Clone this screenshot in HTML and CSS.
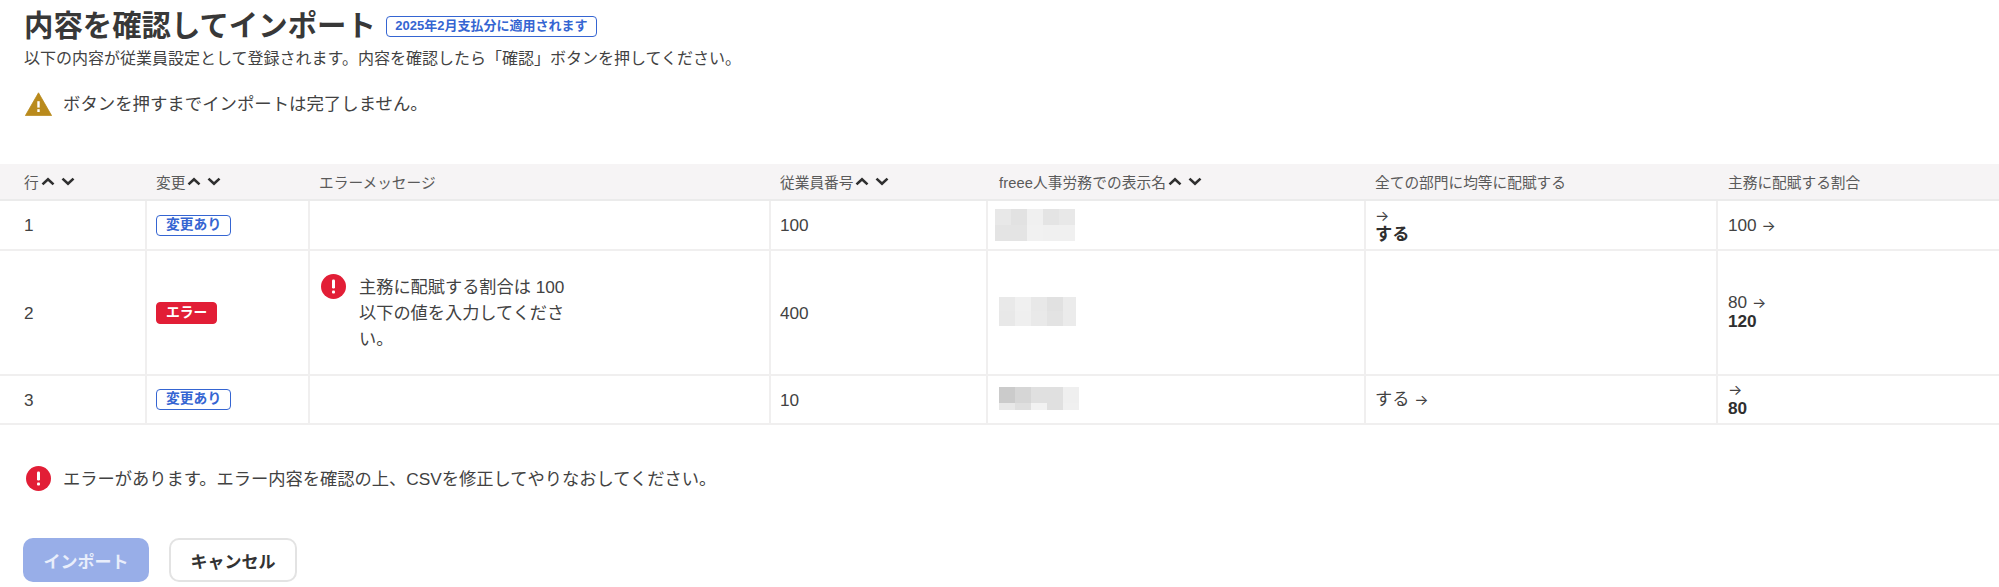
FILE: index.html
```html
<!DOCTYPE html>
<html lang="ja">
<head>
<meta charset="utf-8">
<title>内容を確認してインポート</title>
<link rel="stylesheet" href="styles.css">
</head>
<body>
<section class="intro">
  <div class="title-row">
    <h1 class="title">内容を確認してインポート</h1>
    <span class="tag tag-wide">2025年2月支払分に適用されます</span>
  </div>
  <p class="subtitle">以下の内容が従業員設定として登録されます。内容を確認したら「確認」ボタンを押してください。</p>
  <div class="notice notice-warning">
    <svg class="warn-icon" viewBox="0 0 27 24" aria-hidden="true"><path d="M13.5 .8 26.6 23.6H.4Z" fill="#b98a1c" stroke="#b98a1c" stroke-width=".8" stroke-linejoin="round"/><rect x="12.3" y="9.2" width="2.4" height="6.4" fill="#fff"/><rect x="12.3" y="17.2" width="2.4" height="2.8" fill="#fff"/></svg>
    <span>ボタンを押すまでインポートは完了しません。</span>
  </div>
</section>

<table class="grid">
  <colgroup>
    <col class="c1"><col class="c2"><col class="c3"><col class="c4"><col class="c5"><col class="c6"><col class="c7">
  </colgroup>
  <thead>
    <tr>
      <th class="first"><span class="th-in">行<svg class="chev chev-up" viewBox="0 0 14 9"><path d="M1.5 7.4 7 2.2l5.5 5.2"/></svg><svg class="chev" viewBox="0 0 14 9"><path d="M1.5 1.6 7 6.8l5.5-5.2"/></svg></span></th>
      <th><span class="th-in">変更<svg class="chev chev-up" viewBox="0 0 14 9"><path d="M1.5 7.4 7 2.2l5.5 5.2"/></svg><svg class="chev" viewBox="0 0 14 9"><path d="M1.5 1.6 7 6.8l5.5-5.2"/></svg></span></th>
      <th>エラーメッセージ</th>
      <th><span class="th-in">従業員番号<svg class="chev chev-up" viewBox="0 0 14 9"><path d="M1.5 7.4 7 2.2l5.5 5.2"/></svg><svg class="chev" viewBox="0 0 14 9"><path d="M1.5 1.6 7 6.8l5.5-5.2"/></svg></span></th>
      <th><span class="th-in th-name">freee人事労務での表示名<svg class="chev chev-up" viewBox="0 0 14 9"><path d="M1.5 7.4 7 2.2l5.5 5.2"/></svg><svg class="chev" viewBox="0 0 14 9"><path d="M1.5 1.6 7 6.8l5.5-5.2"/></svg></span></th>
      <th>全ての部門に均等に配賦する</th>
      <th>主務に配賦する割合</th>
    </tr>
  </thead>
  <tbody>
    <tr class="r1">
      <td class="first">1</td>
      <td><span class="tag">変更あり</span></td>
      <td></td>
      <td>100</td>
      <td class="name">
        <svg class="blur blur-a" width="80" height="32" viewBox="0 0 80 32"><rect width="16" height="16" fill="#e8e8e8"/><rect x="16" width="16" height="16" fill="#e2e2e2"/><rect x="32" width="16" height="16" fill="#f0f0f0"/><rect x="48" width="16" height="16" fill="#e4e4e4"/><rect x="64" width="16" height="16" fill="#e8e8e8"/><rect y="16" width="32" height="16" fill="#e4e4e4"/><rect x="32" y="16" width="16" height="16" fill="#f1f1f1"/><rect x="48" y="16" width="32" height="16" fill="#f0f0f0"/></svg>
      </td>
      <td class="change"><span class="arrow">→</span><br><b>する</b></td>
      <td class="last">100 <span class="arrow">→</span></td>
    </tr>
    <tr class="r2">
      <td class="first">2</td>
      <td><span class="tag tag-error">エラー</span></td>
      <td class="err-cell">
        <div class="err-msg">
          <svg class="err-icon" viewBox="0 0 25 25" aria-hidden="true"><circle cx="12.5" cy="12.5" r="12.5" fill="#e21e36"/><rect x="11" y="5.5" width="3" height="9" rx="1.2" fill="#fff"/><rect x="11" y="16.4" width="3" height="3" rx="1" fill="#fff"/></svg>
          <span class="err-text">主務に配賦する割合は 100 以下の値を入力してください。</span>
        </div>
      </td>
      <td>400</td>
      <td class="name">
        <svg class="blur blur-b" width="77" height="29" viewBox="0 0 77 29"><rect width="16" height="14" fill="#e9e9e9"/><rect x="16" width="16" height="14" fill="#f0f0f0"/><rect x="32" width="16" height="14" fill="#e8e8e8"/><rect x="48" width="16" height="14" fill="#e1e1e1"/><rect x="64" width="13" height="14" fill="#ebebeb"/><rect y="14" width="16" height="15" fill="#e8e8e8"/><rect x="16" y="14" width="16" height="15" fill="#efefef"/><rect x="32" y="14" width="16" height="15" fill="#e9e9e9"/><rect x="48" y="14" width="16" height="15" fill="#e3e3e3"/><rect x="64" y="14" width="13" height="15" fill="#ebebeb"/></svg>
      </td>
      <td></td>
      <td class="change last">80 <span class="arrow">→</span><br><b>120</b></td>
    </tr>
    <tr class="r3">
      <td class="first">3</td>
      <td><span class="tag">変更あり</span></td>
      <td></td>
      <td>10</td>
      <td class="name">
        <svg class="blur blur-c" width="80" height="23" viewBox="0 0 80 23"><rect width="16" height="16" fill="#cbcbcb"/><rect x="16" width="16" height="16" fill="#d6d6d6"/><rect x="32" width="32" height="16" fill="#e0e0e0"/><rect x="64" width="16" height="16" fill="#efefef"/><rect y="16" width="16" height="7" fill="#e8e8e8"/><rect x="16" y="16" width="16" height="7" fill="#dfdfdf"/><rect x="32" y="16" width="16" height="7" fill="#f2f2f2"/><rect x="48" y="16" width="16" height="7" fill="#e0e0e0"/><rect x="64" y="16" width="16" height="7" fill="#f0f0f0"/></svg>
      </td>
      <td>する <span class="arrow">→</span></td>
      <td class="change last"><span class="arrow">→</span><br><b>80</b></td>
    </tr>
  </tbody>
</table>

<section class="footer">
  <div class="notice notice-error">
    <svg class="err-icon" viewBox="0 0 25 25" aria-hidden="true"><circle cx="12.5" cy="12.5" r="12.5" fill="#e21e36"/><rect x="11" y="5.5" width="3" height="9" rx="1.2" fill="#fff"/><rect x="11" y="16.4" width="3" height="3" rx="1" fill="#fff"/></svg>
    <span class="notice-text">エラーがあります。エラー内容を確認の上、CSVを修正してやりなおしてください。</span>
  </div>
  <div class="actions">
    <button class="btn btn-primary" type="button" disabled>インポート</button>
    <button class="btn btn-secondary" type="button">キャンセル</button>
  </div>
</section>
</body>
</html>
```
FILE: styles.css
```css
* { box-sizing: border-box; }
html, body { margin: 0; padding: 0; background: #fff; }
body {
  width: 1999px;
  height: 587px;
  overflow: hidden;
  font-family: "Liberation Sans", "Noto Sans CJK JP", sans-serif;
  font-size: 17.2px;
  color: #424242;
}

.intro { padding: 8px 0 0 24px; height: 164px; }
.title-row { display: flex; align-items: center; gap: 10px; height: 36px; }
.title { margin: 0; font-size: 29.4px; line-height: 36px; font-weight: 700; color: #383838; }
.subtitle { margin: 3px 0 0; font-size: 16px; line-height: 24px; }

.notice { display: flex; align-items: center; }
.notice-warning { margin-top: 21px; height: 24px; gap: 11px; font-size: 17.4px; line-height: 22px; }
.warn-icon { width: 27px; height: 24px; flex: none; margin-left: 1px; }
.err-icon { width: 25px; height: 25px; flex: none; }

.tag {
  display: inline-block;
  height: 21px;
  padding: 0 9px;
  border: 1.5px solid #3565d2;
  border-radius: 4px;
  color: #3565d2;
  background: #fff;
  font-size: 13.8px;
  font-weight: 700;
  line-height: 18px;
  white-space: nowrap;
  vertical-align: middle;
}
.tag-wide { width: 211px; padding: 0; font-size: 13px; text-align: center; }
.tag-error { height: 22px; border-color: #e21e36; background: #e21e36; color: #fff; line-height: 19px; }

.grid { width: 1999px; table-layout: fixed; border-collapse: separate; border-spacing: 0; }
.c1 { width: 147px; }
.c2 { width: 163px; }
.c3 { width: 461px; }
.c4 { width: 217px; }
.c5 { width: 378px; }
.c6 { width: 352px; }
.c7 { width: 281px; }

.grid th {
  height: 37px;
  padding: 0 10px;
  background: #f6f4f5;
  border-bottom: 2px solid #ebebeb;
  font-size: 14.7px;
  font-weight: 400;
  text-align: left;
  color: #5a5a5a;
  white-space: nowrap;
}
.grid th.first, .grid td.first { padding-left: 24px; }
.grid th:nth-child(2), .grid td:nth-child(2),
.grid th:nth-child(3), .grid th:nth-child(4), .grid td:nth-child(4),
.grid th:nth-child(6), .grid td:nth-child(6) { padding-left: 9px; }
.grid th:nth-child(5) { padding-left: 11px; }
.th-in { display: inline-flex; align-items: center; }
.th-name { letter-spacing: .1px; }
.chev { width: 14px; height: 9px; margin-left: 6px; flex: none; }
.chev-up { margin-left: 2px; }
.chev path { fill: none; stroke: #2f2f2f; stroke-width: 2.6; }

.grid td {
  padding: 0 10px;
  border-bottom: 2px solid #f0efef;
  border-right: 2px solid #f0efef;
  vertical-align: middle;
  line-height: 18px;
}
.grid td.last { border-right: 0; }
.r1 td { height: 50px; }
.r2 td { height: 125px; }
.r3 td { height: 49px; }

.grid td.name { padding: 0; }
.blur { display: block; }
.blur-a { margin-left: 7px; }
.blur-b { margin: -2px 0 0 11px; }
.blur-c { margin: -2px 0 0 11px; }

.arrow { font-family: "Inter", sans-serif; font-size: 15px; }
.grid td.change { padding-bottom: 2px; }
.change b { font-weight: 700; color: #2f2f2f; }

.grid td.err-cell { padding: 0 0 0 11px; }
.err-msg { display: flex; align-items: flex-start; gap: 13px; line-height: 26px; }
.err-text { width: 210px; }

.footer { padding: 41px 0 0 26px; }
.notice-error { height: 25px; gap: 12px; font-size: 17.25px; }
.notice-text { position: relative; top: -1px; }
.actions { display: flex; gap: 20px; margin: 47px 0 0 -3px; }
.btn {
  height: 44px;
  border-radius: 10px;
  font-family: inherit;
  font-size: 17px;
  font-weight: 700;
  padding: 0;
}
.btn-primary { width: 126px; border: 0; background: #98aee8; color: #e9eefb; }
.btn-secondary { width: 128px; border: 2px solid #e3e3e3; background: #fff; color: #333; }
```
